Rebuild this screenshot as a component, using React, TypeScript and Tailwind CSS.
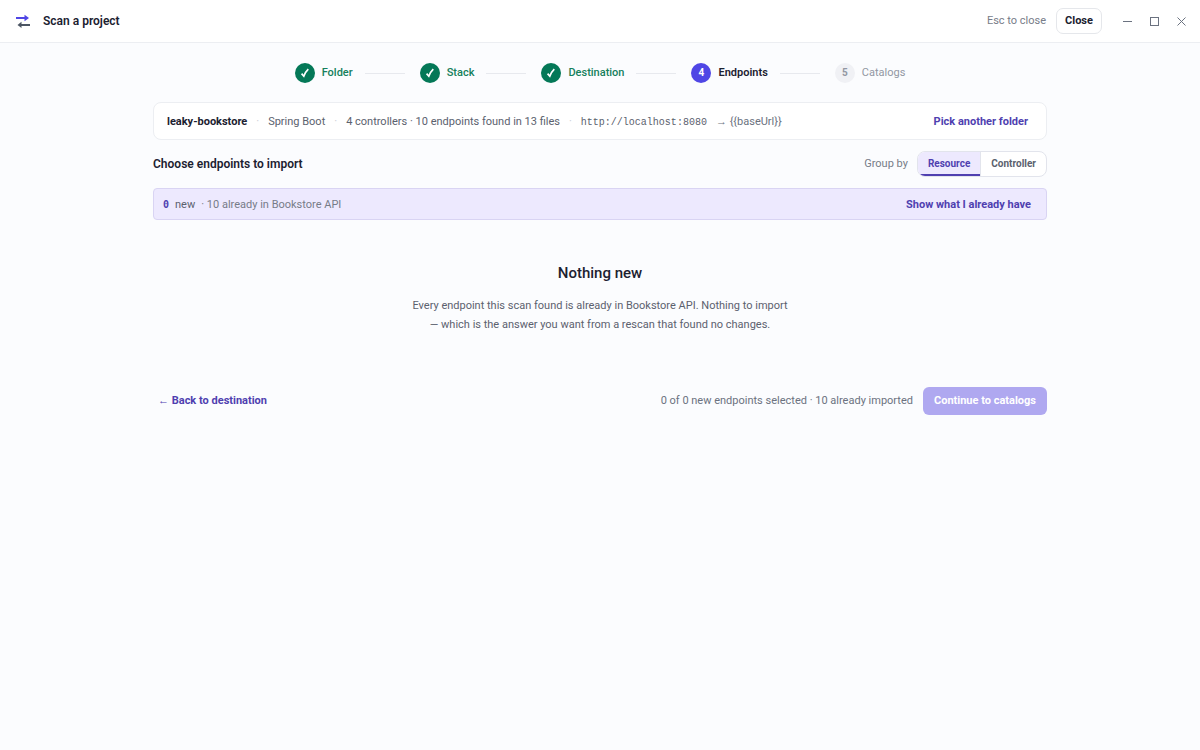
import React, { useState } from 'react';
import clsx from 'clsx';

interface Step {
  label: string;
  state: 'done' | 'current' | 'todo';
}

const steps: Step[] = [
  { label: 'Folder', state: 'done' },
  { label: 'Stack', state: 'done' },
  { label: 'Destination', state: 'done' },
  { label: 'Endpoints', state: 'current' },
  { label: 'Catalogs', state: 'todo' },
];

const groupings = ['Resource', 'Controller'];

function Logo() {
  return (
    <svg width="16" height="14" viewBox="0 0 16 14" fill="none" strokeWidth="2" aria-hidden="true">
      <path d="M1 4h9" stroke="#4f46e5" />
      <path d="M9.5 .8 14 4l-4.500 3.200z" fill="#4f46e5" />
      <path d="M6 11h9" stroke="#4b5563" />
      <path d="M6.500 7.800 2.500 11l4 3z" fill="#4b5563" />
    </svg>
  );
}

function CheckMark() {
  return (
    <svg width="10" height="10" viewBox="0 0 10 10" fill="none" stroke="#fff" strokeWidth="1.7" aria-hidden="true">
      <path d="M1.600 5.600 3.800 8.200Q5.400 4 8.300 1.200" />
    </svg>
  );
}

function TitleBar() {
  return (
    <header className="flex h-[43px] items-center border-b border-[#eceef2] bg-white pl-[15px] pr-[13px]">
      <Logo />
      <h1 className="ml-3 text-[12px] font-semibold text-[#1b2130]">Scan a project</h1>
      <div className="ml-auto flex items-center">
        <span className="mr-[10px] text-[11px] text-[#777c88]">Esc to close</span>
        <button className="h-[26px] w-[46px] rounded-[7px] border border-[#e5e7eb] bg-white text-[11px] font-bold text-[#1b2130]">
          Close
        </button>
        <div className="ml-5 flex items-center gap-4 text-[#6b7280]">
          <button aria-label="Minimize">
            <svg width="11" height="11" viewBox="0 0 11 11" stroke="currentColor"><path d="M1 5.500h9" /></svg>
          </button>
          <button aria-label="Maximize">
            <svg width="11" height="11" viewBox="0 0 11 11" fill="none" stroke="currentColor"><rect x="1.500" y="1.500" width="8" height="8" /></svg>
          </button>
          <button aria-label="Close window">
            <svg width="11" height="11" viewBox="0 0 11 11" stroke="currentColor"><path d="m1.500 1.500 8 8m0-8-8 8" /></svg>
          </button>
        </div>
      </div>
    </header>
  );
}

function Stepper() {
  return (
    <ol className="flex items-center justify-center">
      {steps.map((step, i) => (
        <li key={step.label} className="flex items-center">
          {i > 0 && <span className="ml-3 mr-[15px] h-px w-10 bg-[#e7e9ee]" />}
          <span
            className={clsx(
              'flex size-5 items-center justify-center rounded-full text-[10px] font-bold',
              step.state === 'done' && 'bg-[#047857]',
              step.state === 'current' && 'bg-[#4f46e5] text-white',
              step.state === 'todo' && 'bg-[#f0f1f5] text-[#9297a3]'
            )}
          >
            {step.state === 'done' ? <CheckMark /> : i + 1}
          </span>
          <span
            className={clsx(
              'ml-[7px]',
              step.state === 'done' && 'font-medium text-[#15805c]',
              step.state === 'current' && 'font-semibold text-[#1b2130]',
              step.state === 'todo' && 'text-[#9297a3]'
            )}
          >
            {step.label}
          </span>
        </li>
      ))}
    </ol>
  );
}

function Dot() {
  return <span className="text-[#c9cdd5]">·</span>;
}

export default function App() {
  const [grouping, setGrouping] = useState('Resource');

  return (
    <div className="min-h-screen bg-[#fbfcfe] font-['Roboto',sans-serif] text-[11px] leading-4 text-[#5b616e]">
      <TitleBar />
      <main className="mx-auto max-w-[894px] pt-5">
        <Stepper />

        {/* Scan summary */}
        <section className="mt-[19px] flex h-[38px] items-center rounded-lg border border-[#eceef2] bg-white pt-[2px] pl-[13px] pr-[18px]">
          <div className="flex items-baseline gap-[9px]">
            <strong className="font-bold text-[#1b2130]">leaky-bookstore</strong>
            <Dot />
            <span>Spring Boot</span>
            <Dot />
            <span>4 controllers · 10 endpoints found in 13 files</span>
            <Dot />
            <code className="font-['Liberation_Mono',monospace] text-[10px]">http://localhost:8080</code>
            <span className="text-[#6b7280]">→ {'{{baseUrl}}'}</span>
          </div>
          <button className="ml-auto font-bold text-[#4f3fb0]">Pick another folder</button>
        </section>

        <div className="mt-[11px] flex items-center">
          <h2 className="text-[12px] font-semibold text-[#1b2130]">Choose endpoints to import</h2>
          <span className="ml-auto mr-[9px] text-[#777c88]">Group by</span>
          <div className="flex h-[26px] overflow-hidden rounded-lg border border-[#e2e4ec] bg-white">
            {groupings.map((name) => (
              <button
                key={name}
                aria-pressed={grouping === name}
                onClick={() => setGrouping(name)}
                className={clsx(
                  'px-[10px] text-[10px] font-bold',
                  grouping === name
                    ? 'border-b-2 border-[#4f3fb0] bg-[#ede9fe] pt-[2px] text-[#4f3fb0]'
                    : 'border-l border-[#e2e4ec] text-[#5b616e]'
                )}
              >
                {name}
              </button>
            ))}
          </div>
        </div>

        <div className="mt-[11px] flex h-8 items-center rounded border border-[#d9d4f3] bg-[#ede9fe] pt-[2px] pl-[9px] pr-[15px]">
          <span className="font-['DejaVu_Sans_Mono',monospace] text-[10px] font-bold text-[#4f3fb0]">0</span>
          <span className="ml-[6px]">new</span>
          <span className="ml-[6px] text-[#777c88]">· 10 already in Bookstore API</span>
          <button className="ml-auto font-bold text-[#4f3fb0]">Show what I already have</button>
        </div>

        {/* Empty state */}
        <section className="mx-auto mt-[43px] max-w-[384px] text-center">
          <h3 className="text-[15px] leading-5 font-medium text-[#1b2130]">Nothing new</h3>
          <p className="mt-[13px] leading-[19px]">
            Every endpoint this scan found is already in Bookstore API. Nothing to import — which is the answer you
            want from a rescan that found no changes.
          </p>
        </section>

        <footer className="mt-[53px] flex items-center">
          <button className="ml-[5px] font-bold text-[#4f3fb0]">← Back to destination</button>
          <span className="ml-auto mr-[10px] text-[#6b7280]">0 of 0 new endpoints selected · 10 already imported</span>
          <button disabled className="h-7 rounded-md bg-[#afa8f0] px-[11px] font-bold text-white">
            Continue to catalogs
          </button>
        </footer>
      </main>
    </div>
  );
}
